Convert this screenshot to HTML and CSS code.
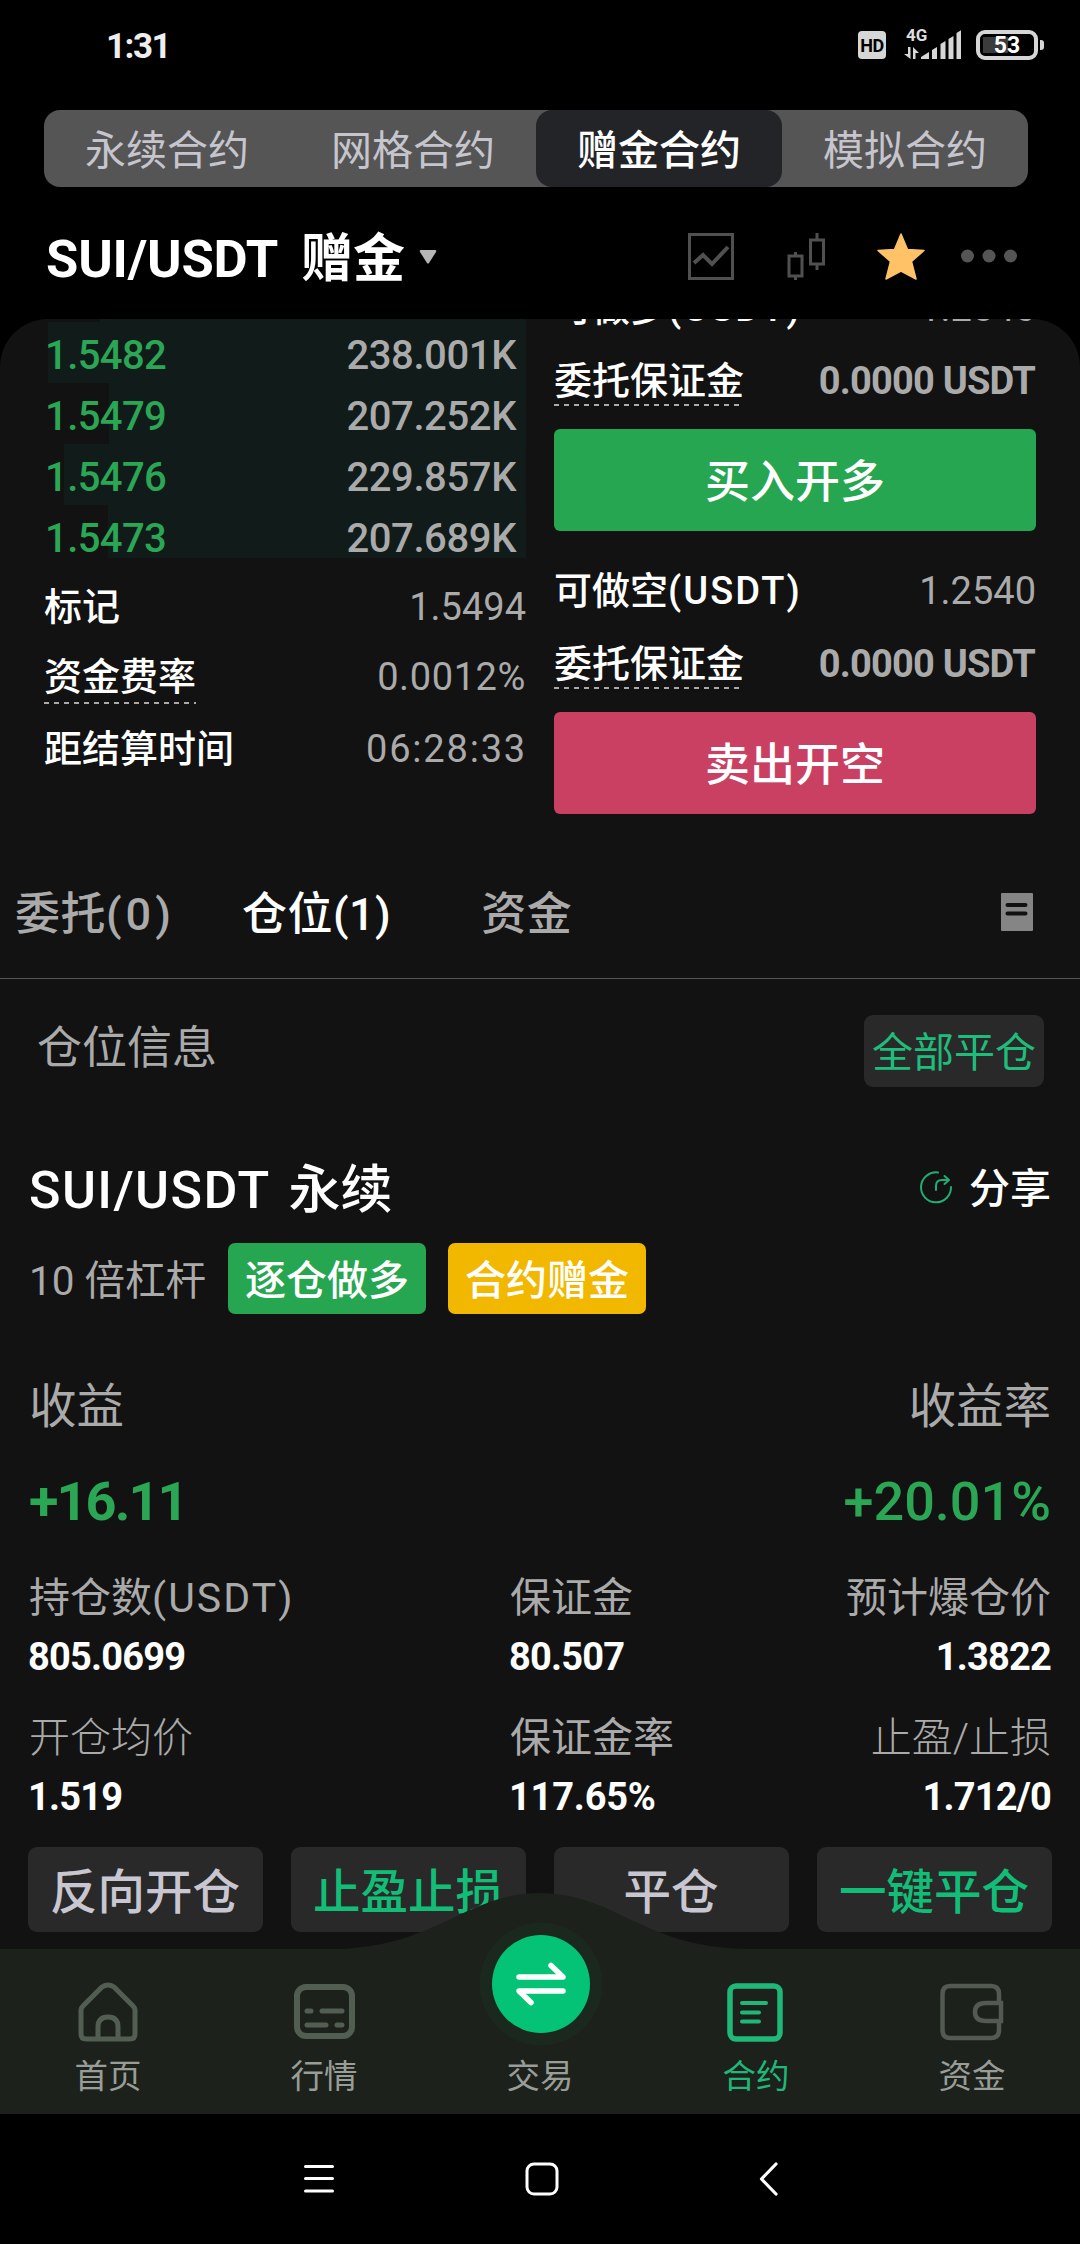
FILE: index.html
```html
<!DOCTYPE html>
<html lang="zh-CN">
<head>
    <meta charset="UTF-8">
    <meta name="viewport" content="width=device-width, initial-scale=1.0">
    <title>SUI/USDT 赠金合约</title>
    <link rel="stylesheet" href="styles.css">
</head>
<body>

<div class="status-bar">
    <span class="time">1:31</span>
    <div class="status-icons">
        <span class="hd">HD</span>
        <div class="signal">
            <span class="net">4G</span>
            <svg width="58" height="32" viewBox="0 0 58 32">
                <g fill="#d6d6d6">
                    <path d="M18 31v-2l8-5v7zM29 31v-9l5-3v12zM37.500 31V16l5-3v18zM45.500 31V11l5-3v23zM53.500 31V5l5-3v29z"/>
                    <path d="M5 19h2.500v12L1 26h4zM10 31V19l6 6h-3.500v6z"/>
                </g>
            </svg>
        </div>
        <div class="battery"><span>53</span></div>
    </div>
</div>

<div class="segment">
    <div class="segment-item">永续合约</div>
    <div class="segment-item">网格合约</div>
    <div class="segment-item active">赠金合约</div>
    <div class="segment-item">模拟合约</div>
</div>

<div class="header">
    <h1><span class="pair">SUI/USDT</span>赠金</h1>
    <svg class="caret" width="18" height="14" viewBox="0 0 18 14"><path d="M2 0h14q2 0 1 2l-7 11q-1 1-2 0L1 2Q0 0 2 0z" fill="#b5b5b5"/></svg>
    <svg class="tools" width="334" height="48" viewBox="0 0 334 48">
        <g fill="none" stroke="#505050" stroke-width="3">
            <rect x="1.500" y="1.500" width="43" height="44"/>
            <path d="M6 30l9-8 9 9 16-17" stroke-width="4"/>
            <rect x="101" y="23" width="13" height="20"/>
            <path d="M107.500 19v4M107.500 43v4"/>
            <rect x="122.500" y="7" width="13" height="24"/>
            <path d="M129 0v7M129 31v6"/>
        </g>
        <path d="M213 1l6.500 15.500 16.500 1-12.500 11 4.500 17.500-15-8-15 8 4.500-17.500-12.500-11 16.500-1z" fill="#ffc267" stroke="#ffc267" stroke-width="1.500" stroke-linejoin="round"/>
        <g fill="#555">
            <circle cx="279.500" cy="23" r="6.500"/>
            <circle cx="301" cy="23" r="6.500"/>
            <circle cx="322.500" cy="23" r="6.500"/>
        </g>
    </svg>
</div>

<div class="panel">
    <div class="trade">
        <div class="book">
            <div class="depth">
                <div class="depth-row" style="background-size: 88.4% 100%"></div>
                <div class="depth-row" style="background-size: 99.2% 100%"><span>1.5482</span><span class="amount">238.001K</span></div>
                <div class="depth-row" style="background-size: 86.5% 100%"><span>1.5479</span><span class="amount">207.252K</span></div>
                <div class="depth-row" style="background-size: 95.8% 100%"><span>1.5476</span><span class="amount">229.857K</span></div>
                <div class="depth-row" style="background-size: 86.7% 100%"><span>1.5473</span><span class="amount">207.689K</span></div>
            </div>
            <div class="info-row"><span>标记</span><span class="num">1.5494</span></div>
            <div class="info-row"><span class="dashed">资金费率</span><span class="num rate">0.0012%</span></div>
            <div class="info-row last"><span>距结算时间</span><span class="num time-left">06:28:33</span></div>
        </div>
        <div class="order">
            <div class="order-block">
                <div class="order-row"><span>可做多<span class="unit">(USDT)</span></span><span class="num">1.2540</span></div>
                <div class="order-row"><span class="dashed">委托保证金</span><span class="din">0.0000 USDT</span></div>
                <div class="btn buy">买入开多</div>
            </div>
            <div class="order-block">
                <div class="order-row"><span>可做空<span class="unit">(USDT)</span></span><span class="num">1.2540</span></div>
                <div class="order-row"><span class="dashed">委托保证金</span><span class="din">0.0000 USDT</span></div>
                <div class="btn sell">卖出开空</div>
            </div>
        </div>
    </div>

    <div class="tabs">
        <span class="tab">委托<span class="count">(0)</span></span>
        <span class="tab active">仓位(1)</span>
        <span class="tab">资金</span>
        <svg class="list-icon" width="32" height="38" viewBox="0 0 32 38">
            <rect width="32" height="38" rx="1" fill="#858585"/>
            <path d="M6.500 12h18M6.500 20.500h18" stroke="#121212" stroke-width="4" stroke-linecap="round"/>
        </svg>
    </div>

    <div class="section-head">
        <span class="section-title">仓位信息</span>
        <div class="close-all">全部平仓</div>
    </div>

    <div class="position">
        <div class="position-head">
            <h2><span class="name">SUI/USDT</span> 永续</h2>
            <div class="share">
                <svg width="34" height="34" viewBox="0 0 34 34" fill="none" stroke="#1fae74" stroke-width="2" stroke-linecap="round" stroke-linejoin="round">
                    <path d="M19 2.500A15 15 0 1 0 32 17"/>
                    <path d="M17 20v-4q0-6 6-6h6M25.500 6l4.500 4-4.500 4"/>
                </svg>
                <span>分享</span>
            </div>
        </div>
        <div class="badges">
            <span class="lever">10 倍杠杆</span>
            <span class="badge green">逐仓做多</span>
            <span class="badge yellow">合约赠金</span>
        </div>
        <div class="profit-label"><span>收益</span><span>收益率</span></div>
        <div class="profit"><span class="amount">+16.11</span><span class="percent">+20.01%</span></div>
        <div class="stats">
            <div class="stat"><p>持仓数<span class="unit">(USDT)</span></p><b>805.0699</b></div>
            <div class="stat"><p>保证金</p><b>80.507</b></div>
            <div class="stat right"><p>预计爆仓价</p><b>1.3822</b></div>
            <div class="stat"><p class="light">开仓均价</p><b>1.519</b></div>
            <div class="stat"><p>保证金率</p><b class="ratio">117.65%</b></div>
            <div class="stat right"><p class="light">止盈/止损</p><b>1.712/0</b></div>
        </div>
    </div>

    <div class="actions">
        <div class="action">反向开仓</div>
        <div class="action green">止盈止损</div>
        <div class="action">平仓</div>
        <div class="action green">一键平仓</div>
    </div>
</div>

<div class="nav">
    <svg class="bump" width="420" height="58" viewBox="0 0 420 58"><path d="M0 56C105 56 135 0 210 0S315 56 420 56v2H0z" fill="#1c211b"/></svg>
    <div class="nav-item">
        <svg width="64" height="60" viewBox="0 0 64 60" fill="none" stroke="#525e52" stroke-width="5">
            <path d="M5 28q0-2 2-4L26 5q6-4 12 0l19 19q2 2 2 4v24q0 5-5 5H10q-5 0-5-5z"/>
            <path d="M22 57V45q0-10 10-10t10 10v12"/>
        </svg>
        <span>首页</span>
    </div>
    <div class="nav-item">
        <svg width="64" height="60" viewBox="0 0 64 60" fill="none" stroke="#525e52">
            <rect x="5" y="5" width="55" height="49" rx="9" stroke-width="6"/>
            <path d="M15 29h4M30 29h20M15 43h19M45 43h5" stroke-width="5" stroke-linecap="round"/>
        </svg>
        <span>行情</span>
    </div>
    <div class="nav-item">
        <svg class="swap" width="124" height="124" viewBox="0 0 124 124">
            <circle cx="62" cy="62" r="61.500" fill="#1b281d"/>
            <circle cx="62" cy="62" r="49" fill="#04c377"/>
            <path d="M40 55h44L72 43.500M84 69H40l12 11.500" fill="none" stroke="#fff" stroke-width="5.500" stroke-linecap="round" stroke-linejoin="round"/>
        </svg>
        <span class="swap-label">交易</span>
    </div>
    <div class="nav-item active">
        <svg width="64" height="60" viewBox="0 0 64 60" fill="none" stroke="#1fb878">
            <rect x="6" y="4" width="50" height="53" rx="6" stroke-width="5.500"/>
            <path d="M18 21h24M18 30.500h17M18 39.500h17" stroke-width="4" stroke-linecap="round"/>
        </svg>
        <span>合约</span>
    </div>
    <div class="nav-item">
        <svg width="64" height="60" viewBox="0 0 64 60" fill="none" stroke="#525a51" stroke-width="4.500">
            <path d="M59 20V12q0-8-8-8H10Q2.500 4 2.500 12v36q0 8 7.500 8h41q8 0 8-8V40"/>
            <path d="M61 21H46q-11 0-11 9t11 9h15z"/>
        </svg>
        <span>资金</span>
    </div>
</div>

<div class="system-nav">
    <svg width="34" height="34" viewBox="0 0 34 34" stroke="#fff" stroke-width="3" stroke-linecap="round"><path d="M3.500 4.500h27M3.500 16.500h27M3.500 29h27"/></svg>
    <svg width="34" height="34" viewBox="0 0 34 34" fill="none" stroke="#fff" stroke-width="3"><rect x="2" y="2" width="30" height="30" rx="7"/></svg>
    <svg class="back" width="34" height="34" viewBox="0 0 34 34" fill="none" stroke="#fff" stroke-width="3.200" stroke-linecap="round" stroke-linejoin="round"><path d="M18 2L3.500 17 18 32"/></svg>
</div>

</body>
</html>
```
FILE: styles.css
```css
* {
    box-sizing: border-box;
}

body {
    width: 1080px;
    height: 2244px;
    margin: 0;
    overflow: hidden;
    background-color: #000;
    color: #fff;
    font-family: Roboto, "Noto Sans CJK SC", sans-serif;
}

h1, h2, p {
    margin: 0;
    font-weight: 500;
}

svg {
    display: block;
    flex-shrink: 0;
}

/* status bar */
.status-bar {
    display: flex;
    justify-content: space-between;
    height: 110px;
    padding: 30px 36px 0 106px;
}

.time {
    font-size: 35px;
    line-height: 34px;
    font-weight: 700;
    letter-spacing: -1.5px;
    color: #eee;
}

.status-icons {
    display: flex;
}

.hd {
    width: 28px;
    height: 28px;
    margin-top: 1px;
    border-radius: 4px;
    background-color: #d6d6d6;
    color: #000;
    font-size: 18px;
    line-height: 29px;
    font-weight: 700;
    letter-spacing: -0.5px;
    text-align: center;
}

.signal {
    position: relative;
    width: 58px;
    margin: -2px 15px 0 17px;
}

.net {
    position: absolute;
    left: 3px;
    top: 0;
    font-size: 17px;
    line-height: 14px;
    font-weight: 700;
    color: #ddd;
}

.battery {
    position: relative;
    width: 62px;
    height: 30px;
    margin-right: 6px;
    border: 4px solid #d6d6d6;
    border-radius: 9px;
    background: linear-gradient(#3b3b3b, #3b3b3b) 3px 3px / 25px 16px no-repeat;
    font-size: 23px;
    line-height: 23px;
    font-weight: 700;
    text-align: center;
}

.battery::after {
    content: "";
    position: absolute;
    right: -10px;
    top: 6px;
    width: 4px;
    height: 10px;
    border-radius: 0 3px 3px 0;
    background-color: #d6d6d6;
}

/* contract type switch */
.segment {
    display: flex;
    height: 77px;
    margin: 0 52px 0 44px;
    border-radius: 16px;
    background-color: #555;
}

.segment-item {
    flex: 1;
    border-radius: 16px;
    color: #c6c5cd;
    font-size: 41px;
    line-height: 82px;
    text-align: center;
}

.segment-item.active {
    background-color: #232428;
    color: #fff;
    font-weight: 500;
}

.header {
    display: flex;
    align-items: center;
    height: 132px;
    padding: 8px 58px 0 46px;
}

h1 {
    padding-top: 4px;
    font-size: 52px;
    line-height: 60px;
    font-weight: 700;
}

.pair {
    margin-right: 23px;
    font-size: 52.5px;
    letter-spacing: -0.2px;
}

.caret {
    margin-left: 14px;
}

.tools {
    margin-left: auto;
}

/* scrolled page content */
.panel {
    height: 1630px;
    overflow: hidden;
    border-radius: 48px 48px 0 0;
    background-color: #121212;
}

.trade {
    display: flex;
    justify-content: space-between;
    height: 495px;
    padding: 0 44px;
}

.book {
    width: 482px;
}

.depth {
    height: 239px;
    overflow: hidden;
}

.depth-row {
    display: flex;
    justify-content: space-between;
    height: 61px;
    padding: 0 10px 0 1px;
    background: linear-gradient(#111c1a, #111c1a) right top no-repeat;
    color: #2ba655;
    font-size: 40px;
    line-height: 67px;
    font-weight: 500;
    letter-spacing: -0.6px;
}

.depth-row:first-child {
    margin-top: -58px;
}

.depth-row .amount {
    color: #aaa;
    letter-spacing: -0.4px;
}

.info-row, .order-row {
    display: flex;
    justify-content: space-between;
    height: 70px;
    font-size: 38px;
    line-height: 71px;
    font-weight: 500;
}

.info-row:nth-child(2) {
    margin-top: 14px;
}

.info-row.last {
    line-height: 75px;
}

.num {
    color: #aaa;
    font-weight: 400;
}

.num.rate {
    letter-spacing: 0.6px;
}

.time-left {
    letter-spacing: 1.8px;
    margin-right: -1px;
}

.din {
    margin-right: 1px;
    color: #aaa;
    font-weight: 700;
    letter-spacing: -0.8px;
}

.unit {
    letter-spacing: 2.1px;
}

.dashed {
    background: repeating-linear-gradient(90deg, #aaa 0 5px, transparent 5px 10px) 0 60px / 100% 2px no-repeat;
}

.order {
    width: 482px;
    margin: -48px 0 0;
}

.order-block {
    margin-bottom: 23px;
}

.order-row {
    height: 73px;
    line-height: 75px;
}

.btn {
    height: 102px;
    margin-top: 12px;
    border-radius: 6px;
    font-size: 45px;
    line-height: 107px;
    font-weight: 500;
    text-align: center;
}

.buy {
    background-color: #27a651;
}

.sell {
    background-color: #c94063;
}

/* position tabs */
.tabs {
    display: flex;
    align-items: center;
    height: 165px;
    padding: 32px 47px 0 15px;
    border-bottom: 1px solid #555;
    font-size: 45px;
    line-height: 60px;
}

.tab {
    margin: 5px 67px 0 0;
    color: #aaa;
    font-weight: 500;
    letter-spacing: 0.5px;
}

.tab .count {
    letter-spacing: 4px;
}

.tab.active {
    margin-right: 90px;
    color: #fff;
}

.list-icon {
    margin-left: auto;
}

.section-head {
    display: flex;
    justify-content: space-between;
    padding: 36px 36px 0 37px;
}

.section-title {
    color: #aaa;
    font-size: 45px;
    line-height: 67px;
}

.close-all {
    width: 180px;
    height: 72px;
    border-radius: 9px;
    background-color: #292929;
    color: #1fbd7c;
    font-size: 41px;
    line-height: 76px;
    text-align: center;
}

.position {
    padding: 72px 29px 0 29px;
}

.position-head {
    display: flex;
    justify-content: space-between;
    align-items: center;
    height: 60px;
}

h2 {
    padding-top: 4px;
    font-size: 52px;
    line-height: 64px;
}

.name {
    margin-right: 5px;
    letter-spacing: 1.4px;
}

.share {
    display: flex;
    align-items: center;
    margin-top: -4px;
    font-size: 41px;
    line-height: 56px;
    font-weight: 500;
    gap: 16px;
}

.share span {
    padding-top: 4px;
}

.badges {
    display: flex;
    height: 71px;
    margin-top: 24px;
    font-size: 41px;
    line-height: 76px;
}

.lever {
    width: 199px;
    color: #aaa;
    font-size: 40.5px;
}

.badge {
    width: 198px;
    margin-right: 22px;
    border-radius: 7px;
    font-weight: 500;
    text-align: center;
}

.badge.green {
    background-color: #27a651;
}

.badge.yellow {
    background-color: #f2b800;
}

.profit-label {
    display: flex;
    justify-content: space-between;
    height: 100px;
    margin-top: 41px;
    color: #aaa;
    font-size: 47.5px;
    line-height: 104px;
}

.profit {
    display: flex;
    justify-content: space-between;
    height: 90px;
    color: #2ba655;
    font-size: 54px;
    line-height: 93px;
}

.profit .amount {
    font-weight: 700;
    letter-spacing: -1.9px;
}

.profit .percent {
    font-weight: 500;
}

.stats {
    display: grid;
    grid-template-columns: 481px 240px 301px;
    row-gap: 20px;
    margin-top: 22px;
}

.stat p {
    color: #aaa;
    font-size: 41px;
    line-height: 62px;
    height: 60px;
    font-weight: 400;
}

.stat p.light {
    font-weight: 300;
}

.stat b {
    display: block;
    font-size: 38px;
    line-height: 61px;
    height: 60px;
    letter-spacing: -0.8px;
    text-indent: -1px;
}

.stat b.ratio {
    letter-spacing: -0.2px;
}

.stat.right {
    text-align: right;
}

.actions {
    display: flex;
    gap: 28px;
    padding: 20px 28px 0;
}

.action {
    width: 235px;
    height: 85px;
    border-radius: 9px;
    background-color: #292929;
    color: #c8c6d0;
    font-size: 47.5px;
    line-height: 92px;
    font-weight: 500;
    text-align: center;
    text-indent: -1px;
}

.action.green {
    color: #12bd78;
}

/* bottom navigation */
.nav {
    position: relative;
    display: flex;
    height: 165px;
    background-color: #1c211b;
}

.bump {
    position: absolute;
    left: 330px;
    top: -56px;
}

.nav-item {
    position: relative;
    display: flex;
    flex: 1;
    flex-direction: column;
    align-items: center;
    padding-top: 33px;
    color: #999d98;
    font-size: 33.5px;
    line-height: 40px;
}

.nav-item span {
    margin-top: 15px;
}

.nav-item.active {
    color: #1fb878;
}

/* round button sticks out over the bar */
.swap {
    position: absolute;
    left: 47px;
    top: -27px;
}

.nav-item .swap-label {
    margin-top: 75px;
}

.system-nav {
    display: flex;
    justify-content: center;
    gap: 189px;
    height: 130px;
    padding: 48px 0 0 14px;
}

.system-nav .back {
    margin-left: 10px;
}
```
